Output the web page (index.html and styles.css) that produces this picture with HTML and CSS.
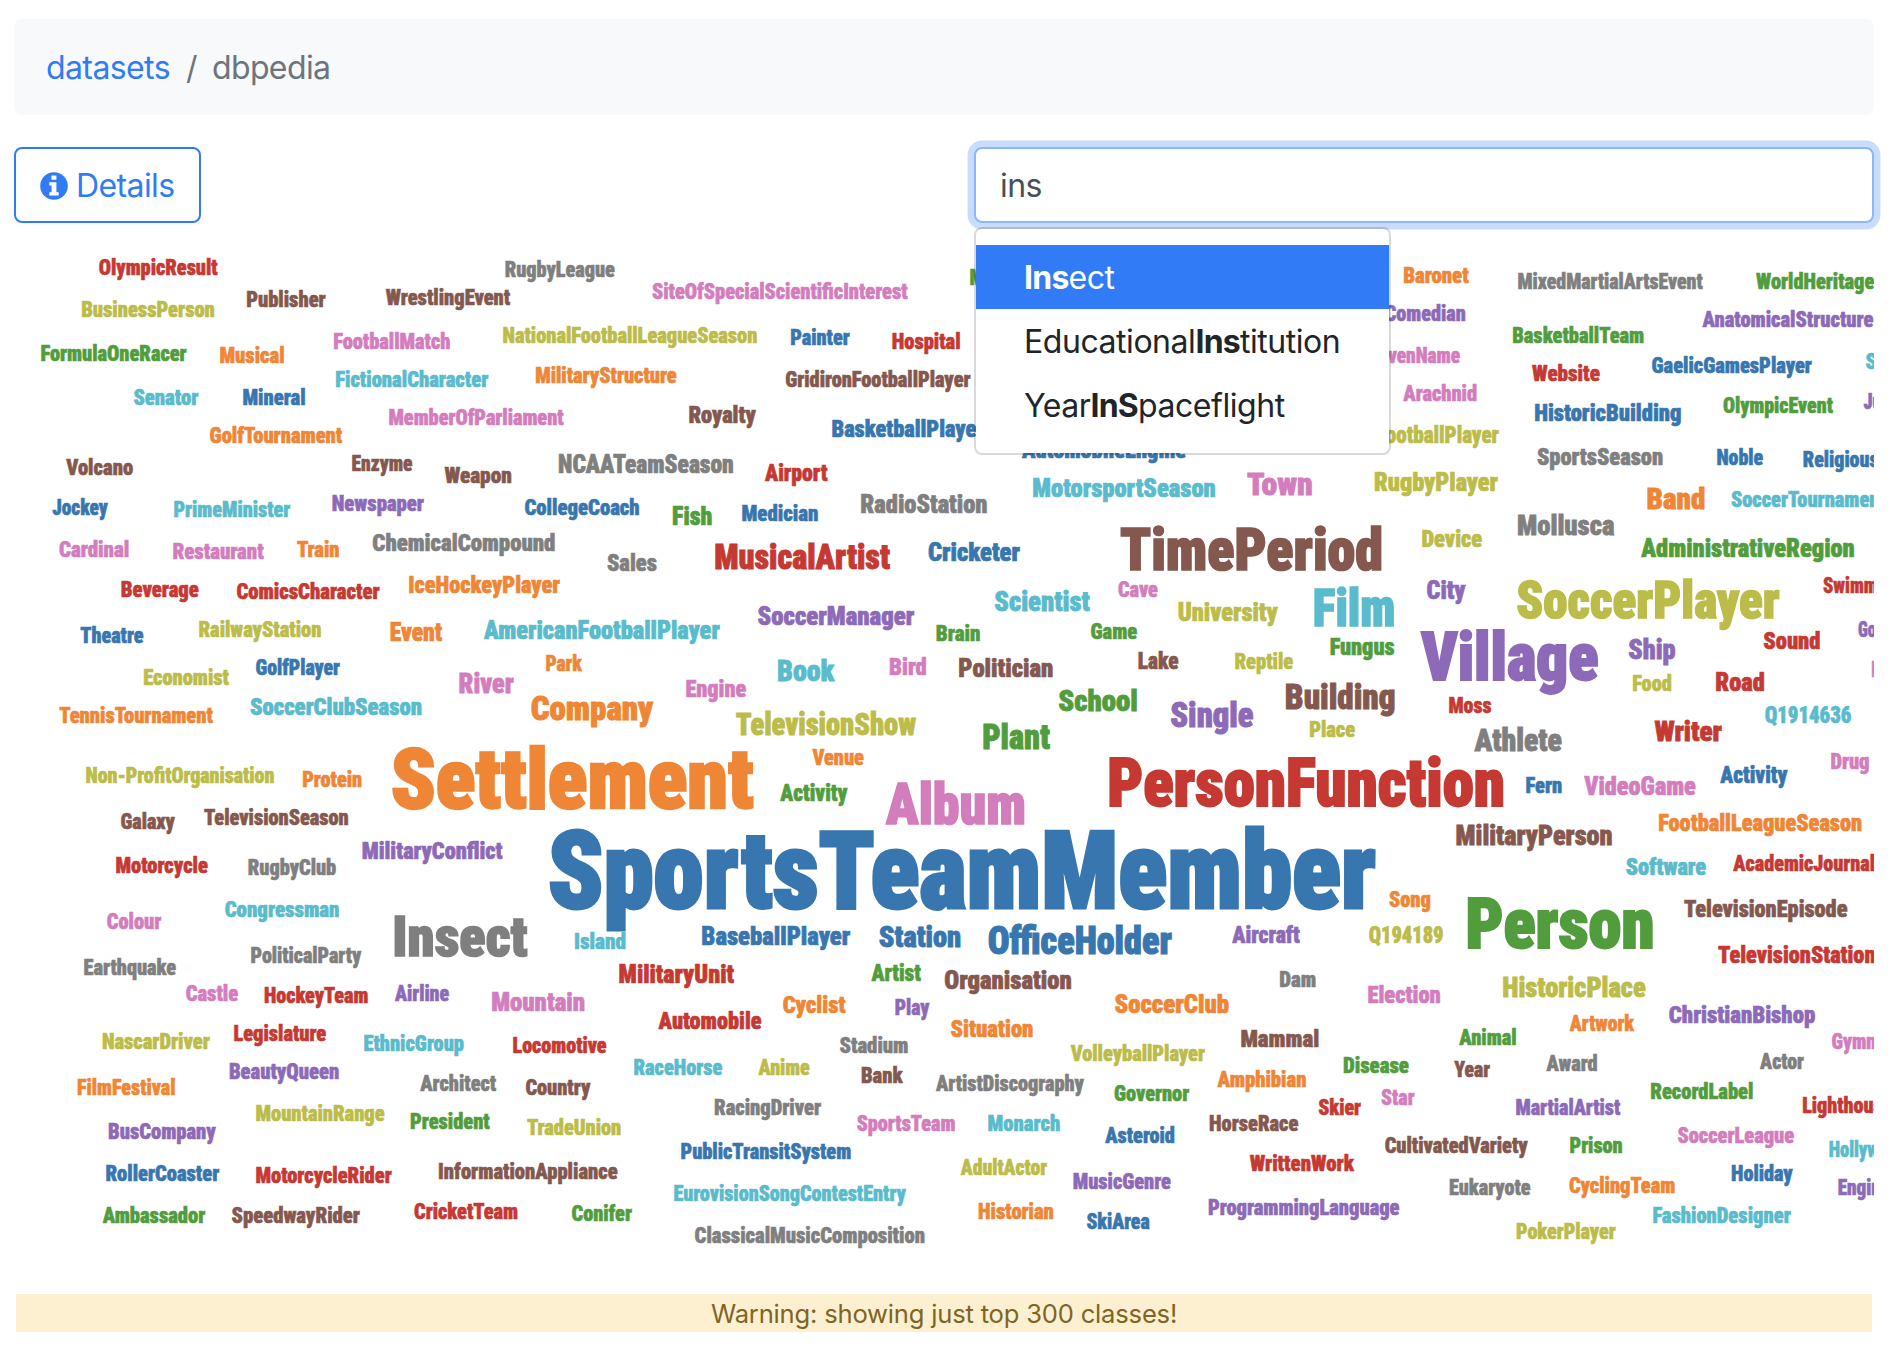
FILE: index.html
```html
<!DOCTYPE html>
<html lang="en">
<head>
<meta charset="utf-8">
<title>dbpedia</title>
<link rel="stylesheet" href="styles.css">
</head>
<body>
<main class="page">
  <nav class="breadcrumb">
    <a class="breadcrumb-link" href="#">datasets</a>
    <span class="breadcrumb-sep">/</span>
    <span class="breadcrumb-current">dbpedia</span>
  </nav>
  <div class="toolbar">
    <button class="btn-details" type="button">
      <svg class="icon-info" viewBox="0 0 28 28"><circle cx="14" cy="14" r="13.8" fill="currentColor"/><path fill="#fff" d="M11.4 3.6h5v4.2h-5zM9.3 10.2h7.1v10h2.3v3.4H9.3v-3.4h2.3v-6.6H9.3z"/></svg>
      <span>Details</span>
    </button>
    <div class="search">
      <input class="search-input" type="text" value="ins">
      <div class="suggestions">
        <a class="suggestion active" href="#"><b>Ins</b>ect</a>
        <a class="suggestion" href="#">Educational<b>Ins</b>titution</a>
        <a class="suggestion" href="#">Year<b>InS</b>paceflight</a>
      </div>
    </div>
  </div>
  <svg class="cloud" id="cloud" viewBox="14 223 1860 1071"></svg>
  <div class="warning">Warning: showing just top 300 classes!</div>
</main>
<script src="cloud.js"></script>
</body>
</html>
```
FILE: styles.css
```css
* { box-sizing: border-box; }
body { margin: 0; background: #fff; font-family: Inter, "Liberation Sans", sans-serif; font-size: 32px; font-weight: 430; line-height: 48px; letter-spacing: -0.6px; color: #212529; }
.page { display: flex; flex-direction: column; padding: 19px 16px 0 14px; height: 1350px; overflow: hidden; }
.breadcrumb { display: flex; height: 96px; padding: 25px 32px 0; border-radius: 8px; background: #f8f9fb; flex: none; }
.breadcrumb-link { color: #317cf6; text-decoration: none; }
.breadcrumb-sep { padding: 0 15px 0 16px; color: #6c757d; }
.breadcrumb-current { color: #6c757d; }
.toolbar { display: flex; justify-content: space-between; align-items: flex-start; margin-top: 32px; height: 76px; flex: none; }
.btn-details { display: flex; align-items: center; gap: 8px; width: 187px; height: 76px; padding: 2px 24px 0; border: 2px solid #317cf6; border-radius: 8px; background: #fff; color: #317cf6; font: inherit; letter-spacing: inherit; }
.icon-info { width: 28px; height: 28px; flex: none; }
.search { position: relative; width: 900px; z-index: 2; }
.search-input { display: block; width: 100%; height: 76px; padding: 12px 24px; border: 2px solid #8bb8f8; border-radius: 8px; background: #fff; box-shadow: 0 0 0 6.4px #c9dcfd; color: #495057; font: inherit; letter-spacing: inherit; outline: none; }
.suggestions { position: absolute; top: 80px; left: 0; width: 417px; padding: 16px 0; border: 2px solid rgba(0, 0, 0, .15); border-radius: 8px; background: #fff; background-clip: padding-box; }
.suggestion { display: block; height: 64px; padding: 9px 48px 0; color: #212529; text-decoration: none; white-space: nowrap; letter-spacing: -0.45px; }
.suggestion b { font-weight: 700; letter-spacing: -0.75px; }
.suggestion.active { background: #317cf6; color: #fff; }
.cloud { display: block; width: 1860px; height: 1071px; flex: none; overflow: hidden; letter-spacing: 0; }
.cloud text { stroke-linejoin: miter; stroke-miterlimit: 3; }
.warning { flex: none; height: 38px; margin: 0 2px; padding-top: 1px; background: #fcf0d1; color: #7f6523; font-size: 25.6px; line-height: 38px; letter-spacing: -0.2px; text-align: center; }
```
FILE: cloud.js
```js
const COLORS = {
  b: '#3876af', o: '#ef8636', g: '#519d3e', r: '#c53932', p: '#8d6ab8',
  n: '#84584e', k: '#d37dbd', y: '#7f7f7f', l: '#bbbc49', c: '#59bbcb'
};
// label, left, right, baseline, colour, cap height (16 when omitted)
const WORDS = `
OlympicResult 99 217.7 275 r
BusinessPerson 81.7 214.3 317 l
Publisher 246.7 325.7 307 n
WrestlingEvent 385.7 510.3 305 n
FormulaOneRacer 41 186.7 361 g
Musical 220 284 363 o
FootballMatch 333.7 450 349 k
FictionalCharacter 335.7 488.3 387 c
Senator 133.7 198.3 405 c
Mineral 243 305 405 b
MemberOfParliament 389 563.7 425 k
GolfTournament 210 342.3 443 o
Volcano 66 133 475 n
Enzyme 352 412.3 471 n
Weapon 444.3 511.3 483 n
Jockey 52.3 108 515 b
PrimeMinister 174 290.3 517 c
Newspaper 332.3 424 511 p
Cardinal 59.3 128.7 557 k
Restaurant 173 263.7 559 k
Train 297 339 557 o
ChemicalCompound 372.7 555 551 y 18
RugbyLeague 505.3 614.7 277 y
SiteOfSpecialScientificInterest 652.3 907.7 299 k
NationalFootballLeagueSeason 503 757 343 l
Painter 790.7 849.7 345 b
Hospital 892.3 960 349 r
MilitaryStructure 535.7 676.7 383 o
GridironFootballPlayer 785.7 970.7 387 n
Royalty 689 756 423 n 18
BasketballPlayer 832 984 437 b 18
NCAATeamSeason 558.7 733.3 473 y 19.5
Airport 764.7 827.7 481 r 18
CollegeCoach 524.7 639.3 515 b
Fish 672.7 711.7 525 g 19
Medician 742 818 521 b
RadioStation 861 987 513 y 19
Sales 607.3 656.7 571 y 18
MusicalArtist 715 890 569 r 26
Cricketer 928.3 1020 561 b 19
Museum 970 1036 285 g
AutomobileEngine 1021.7 1186 458 b 18
GivenName 1372 1460 363 k
Comedian 1385 1465.3 321 p
CanadianFootballPlayer 1298 1499 443 l 18
Baronet 1403.7 1468.7 283 o
MixedMartialArtsEvent 1518 1702.7 289 y
WorldHeritageSite 1756 1907 289 g
AnatomicalStructure 1702.3 1873.3 327 p
BasketballTeam 1512.7 1643.7 343 g
Website 1532 1599.7 381 r
GaelicGamesPlayer 1652 1812 373 b
Saint 1865.7 1908 369 c
Arachnid 1403 1476.7 401 k
OlympicEvent 1723.3 1833 413 g
Judge 1863.6 1909 409 p
HistoricBuilding 1534.7 1681 421 b 18
SportsSeason 1537.3 1662.7 465 y 18
Noble 1717 1763 465 b
ReligiousBuilding 1803.3 1945 467 b
RugbyPlayer 1374.7 1498 491 l 19
Band 1647.3 1704.7 509 o 22
SoccerTournament 1731.3 1886 507 c
Device 1422 1482 547 l 18
Mollusca 1517.7 1614.3 535 y 21
AdministrativeRegion 1641 1854.3 557 g 19
Beverage 121.3 198.7 597 r
ComicsCharacter 236.7 379.7 599 r
IceHockeyPlayer 409 560 593 o 18
Theatre 80.3 143.3 643 b
RailwayStation 199 321 637 l
Event 390.3 442.3 641 o 19
Economist 143.7 229 685 l
GolfPlayer 256 340 675 b
River 459.3 513.7 693 k 21
TennisTournament 59.3 213 723 o
SoccerClubSeason 250.3 421.7 715 c 18
Non-ProfitOrganisation 86 274 783 l
Protein 302.7 361.7 787 o
Settlement 392 753.7 808.7 o 62
Galaxy 121 175 829 n
TelevisionSeason 204 348.3 825 n
Motorcycle 116 207.7 873 r
RugbyClub 248.3 336 875 y
MilitaryConflict 362.3 502.7 859 p 18
Colour 107 161.3 929 k
Congressman 225 339 917 c
Insect 394.3 527.7 956.7 y 41.5
PoliticalParty 251 361.6 963 y
AmericanFootballPlayer 483.7 720 639 c 19
SoccerManager 758 914.3 625 p 19
Brain 936.3 980 641 g
Park 546 582.3 671 o
Company 531.3 653.7 720.7 o 25
Engine 686 746 697 k 18
Book 777.7 835 681 c 22
Bird 889.7 926.3 675 k 18
TelevisionShow 736 916 735 l 23
Venue 812.3 863.7 765 o
Activity 780 847.7 801 g 18
Album 885.3 1024.7 825 k 43
SportsTeamMember 549.3 1376 909 b 80
Island 574.7 625.7 949 c
BaseballPlayer 702 850.3 945 b 19
Station 879.3 960.6 947 b 22
MotorsportSeason 1033 1215.3 497 c 19
Town 1247.3 1312 495 k 24
TimePeriod 1120.3 1382 570.7 n 45
Scientist 994.7 1090 611 c 21
Cave 1118.3 1157.7 597 k
University 1178.3 1278 621 l 19
Film 1314 1394.3 627 c 39
City 1427 1465.7 599 p 19
Game 1091 1137 639 g
Fungus 1330.3 1394.3 655 g 18
Lake 1138.3 1178.3 669 n 18
Reptile 1235 1293 669 l
Politician 959 1052.7 677 n 19
School 1058.7 1137 711 g 22
Single 1170.7 1253.3 727 p 26
Building 1285.7 1394.7 709 n 26
Place 1309.7 1355 737 l
Plant 983 1050 749 g 26
PersonFunction 1109 1503.7 807 r 50
Song 1389.3 1430.3 907 o
OfficeHolder 988.3 1172 955 b 29
Aircraft 1232 1300 943 p 18
Q194189 1369 1443 943 l 18
SoccerPlayer 1517 1779.7 619 l 39
Swimmer 1823.3 1893 593 r
Village 1420 1598 680.7 p 50
Ship 1628.7 1675.3 659 p 21
Sound 1763.7 1820 649 r 18
GovernmentAgency 1858.3 1990 637 p
Bridge 1871.7 1920 677 k
Food 1632.7 1671.3 691 l
Road 1716 1764.3 691 r 19
Moss 1449 1491.3 713 r
Q1914636 1765 1851.3 723 c 18
Writer 1654.3 1722 741 r 21
Athlete 1474 1561.7 751 y 24
Fern 1526 1561.7 793 b
VideoGame 1584 1695.7 795 k 19
Activity 1720 1787.7 783 b 18
Drug 1831 1869 769 k
FootballLeagueSeason 1658.7 1861.7 831 o 18
MilitaryPerson 1456.3 1612 845 n 21
Software 1626 1706 875 c 18
AcademicJournal 1733 1874.5 871 r
TelevisionEpisode 1684 1847.3 917 n 18
Person 1467.3 1653 948.7 g 52.5
TelevisionStation 1718.2 1875 963 r 18
Earthquake 84 176 975 y
Castle 186 238 1001 k
HockeyTeam 264.5 367.8 1003 r
Airline 394.7 449 1001 p
Mountain 491.8 584.5 1011 k 19
MilitaryUnit 619.2 734.1 983 r 19
NascarDriver 102.4 209.8 1049 l
Legislature 233.9 326.1 1041 r
EthnicGroup 364 463.7 1051 c
Locomotive 513 606.5 1053 r
FilmFestival 77.5 175 1095 o
BeautyQueen 229.4 338.8 1079 p
Architect 420 496.3 1091 y
Country 525.7 590.6 1095 n
MountainRange 256 384.5 1121 l
President 410.6 489.8 1129 g
TradeUnion 527 620.8 1135 l
BusCompany 108.6 216 1139 p
RollerCoaster 106 219.2 1181 b
MotorcycleRider 256 391.8 1183 r
InformationAppliance 438.8 617.5 1179 n
Ambassador 102.4 205.3 1223 g
SpeedwayRider 231.8 360 1223 n
CricketTeam 414.3 517.6 1219 r
Conifer 571.8 632 1221 g
Artist 871.2 921 981 g 18
Organisation 944.7 1071.2 989 n 19
Cyclist 783 845.5 1013 o 18
Play 895.3 929.6 1015 p
SoccerClub 1114.9 1228.8 1013 o 19
Automobile 658.2 761.4 1029 r 18
Situation 950.8 1032.9 1037 o 18
Stadium 839.8 908 1053 y
Mammal 1241 1318.6 1047 n 18
VolleyballPlayer 1070.4 1205 1061 l
RaceHorse 634 722.2 1075 c
Anime 758.2 809.6 1075 l
Bank 861.4 903 1083 n
ArtistDiscography 935.7 1084.3 1091 y
Governor 1114.5 1189.2 1101 g
Amphibian 1217.3 1306 1087 o
RacingDriver 714.5 821 1115 y
SportsTeam 857 955 1131 k
Monarch 988 1059.8 1131 c
Asteroid 1105 1174.5 1143 b
HorseRace 1209.6 1298.2 1131 n
PublicTransitSystem 681 850.8 1159 b
AdultActor 960.6 1047 1175 l
MusicGenre 1073.3 1170.8 1189 p
WrittenWork 1249.6 1354.5 1171 r
EurovisionSongContestEntry 674 906.3 1201 c
Historian 978.6 1053.3 1219 o
SkiArea 1086.7 1149.6 1229 b
ProgrammingLanguage 1208.4 1399.4 1215 p
ClassicalMusicComposition 694.9 924.7 1243 y
Dam 1279.8 1315.7 987 y
Election 1368 1440.2 1003 k 18
HistoricPlace 1503 1645.5 997 l 21
ChristianBishop 1669.2 1815 1023 p 18
Artwork 1569.6 1634.5 1031 o
Animal 1459 1516 1045 g
Gymnast 1832 1900 1049 k
Disease 1343.5 1408.8 1073 g
Year 1454 1490 1077 n
Award 1546.3 1597.3 1071 y
Actor 1759.8 1803.9 1069 y
Star 1381.4 1414.5 1105 k
MartialArtist 1516 1620.2 1115 p
RecordLabel 1650.8 1752.9 1099 g
Lighthouse 1802.7 1892 1113 r
Skier 1318.6 1361 1115 r
CultivatedVariety 1385 1528 1153 n
Prison 1570 1622.2 1153 g
SoccerLeague 1677.8 1794 1143 k
HollywoodCartoon 1829.2 1965 1157 c
Holiday 1731.6 1792.9 1181 b
Eukaryote 1449.6 1530.4 1195 y
CyclingTeam 1569.2 1674.9 1193 o
Engineer 1838.2 1906 1195 p
FashionDesigner 1652.9 1790.8 1223 c
PokerPlayer 1516.5 1615.7 1239 l
`.trim().split('\n').map(line => line.split(' '));

const FACE = 'condensed 900 SIZE Roboto';
const STROKE = 0.028; // extra weight, in em
const ctx = document.createElement('canvas').getContext('2d');
const cloud = document.getElementById('cloud');
ctx.font = FACE.replace('SIZE', '100px');
const capHeight = ctx.measureText('H').actualBoundingBoxAscent / 100;
for (const [label, left, right, baseline, colour, cap = 16] of WORDS) {
  const size = cap / (capHeight + STROKE);
  const half = size * STROKE / 2;
  const ink = ctx.measureText(label);
  const inkWidth = (ink.actualBoundingBoxRight + ink.actualBoundingBoxLeft) * size / 100 + 2 * half;
  const scale = (right - left) / inkWidth;
  const text = document.createElementNS('http://www.w3.org/2000/svg', 'text');
  text.textContent = label;
  text.style.font = FACE.replace('SIZE', size + 'px');
  text.setAttribute('fill', COLORS[colour]);
  text.setAttribute('stroke', COLORS[colour]);
  text.setAttribute('stroke-width', 2 * half);
  text.setAttribute('x', ink.actualBoundingBoxLeft * size / 100 + half);
  text.setAttribute('transform', `translate(${left} ${baseline - half}) scale(${scale} 1)`);
  cloud.appendChild(text);
}
```
